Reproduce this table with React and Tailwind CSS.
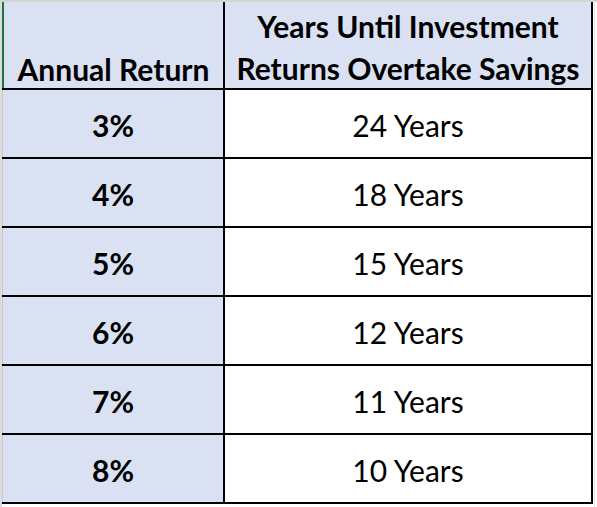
import React from 'react';

const rows = [
  { rate: '3%', years: '24 Years' },
  { rate: '4%', years: '18 Years' },
  { rate: '5%', years: '15 Years' },
  { rate: '6%', years: '12 Years' },
  { rate: '7%', years: '11 Years' },
  { rate: '8%', years: '10 Years' },
];

export default function App() {
  return (
    <div className="w-[597px] h-[507px] bg-white overflow-hidden font-['Lato',sans-serif] text-black">
      <div className="h-[2px] bg-[#d4d4d4]" />
      <div className="flex">
        <div className="w-[2px] h-[505px] bg-[#dcdcdc]" />
        <div className="w-[591px]">
          {/* header */}
          <div className="flex h-[88px] border-b-2 border-black bg-[#d9e1f2]">
            <div className="w-[223px] border-l-2 border-[#217346] border-r-2 border-r-black flex items-end justify-center">
              <span className="text-[30px] font-bold leading-[38px]">Annual Return</span>
            </div>
            <div className="w-[368px] border-r-2 border-black flex items-end justify-center">
              <span className="text-[30px] font-bold leading-[42px] text-center translate-y-[1px]">
                Years Until Investment
                <br />
                Returns Overtake Savings
              </span>
            </div>
          </div>

          {rows.map((row) => (
            <div key={row.rate} className="flex h-[69px] border-b-2 border-black">
              <div className="w-[223px] bg-[#d9e1f2] border-l border-[#c8c8c8] border-r-2 border-r-black flex items-center justify-center pt-[2px]">
                <span className="text-[30px] font-bold leading-none">{row.rate}</span>
              </div>
              <div className="w-[368px] bg-white border-r-2 border-black flex items-center justify-center pt-[2px]">
                <span className="text-[30px] leading-none">{row.years}</span>
              </div>
            </div>
          ))}
        </div>
        <div className="w-[3px] h-[505px] border-l border-[#e6e6e6] ml-[1px]" />
      </div>
    </div>
  );
}
